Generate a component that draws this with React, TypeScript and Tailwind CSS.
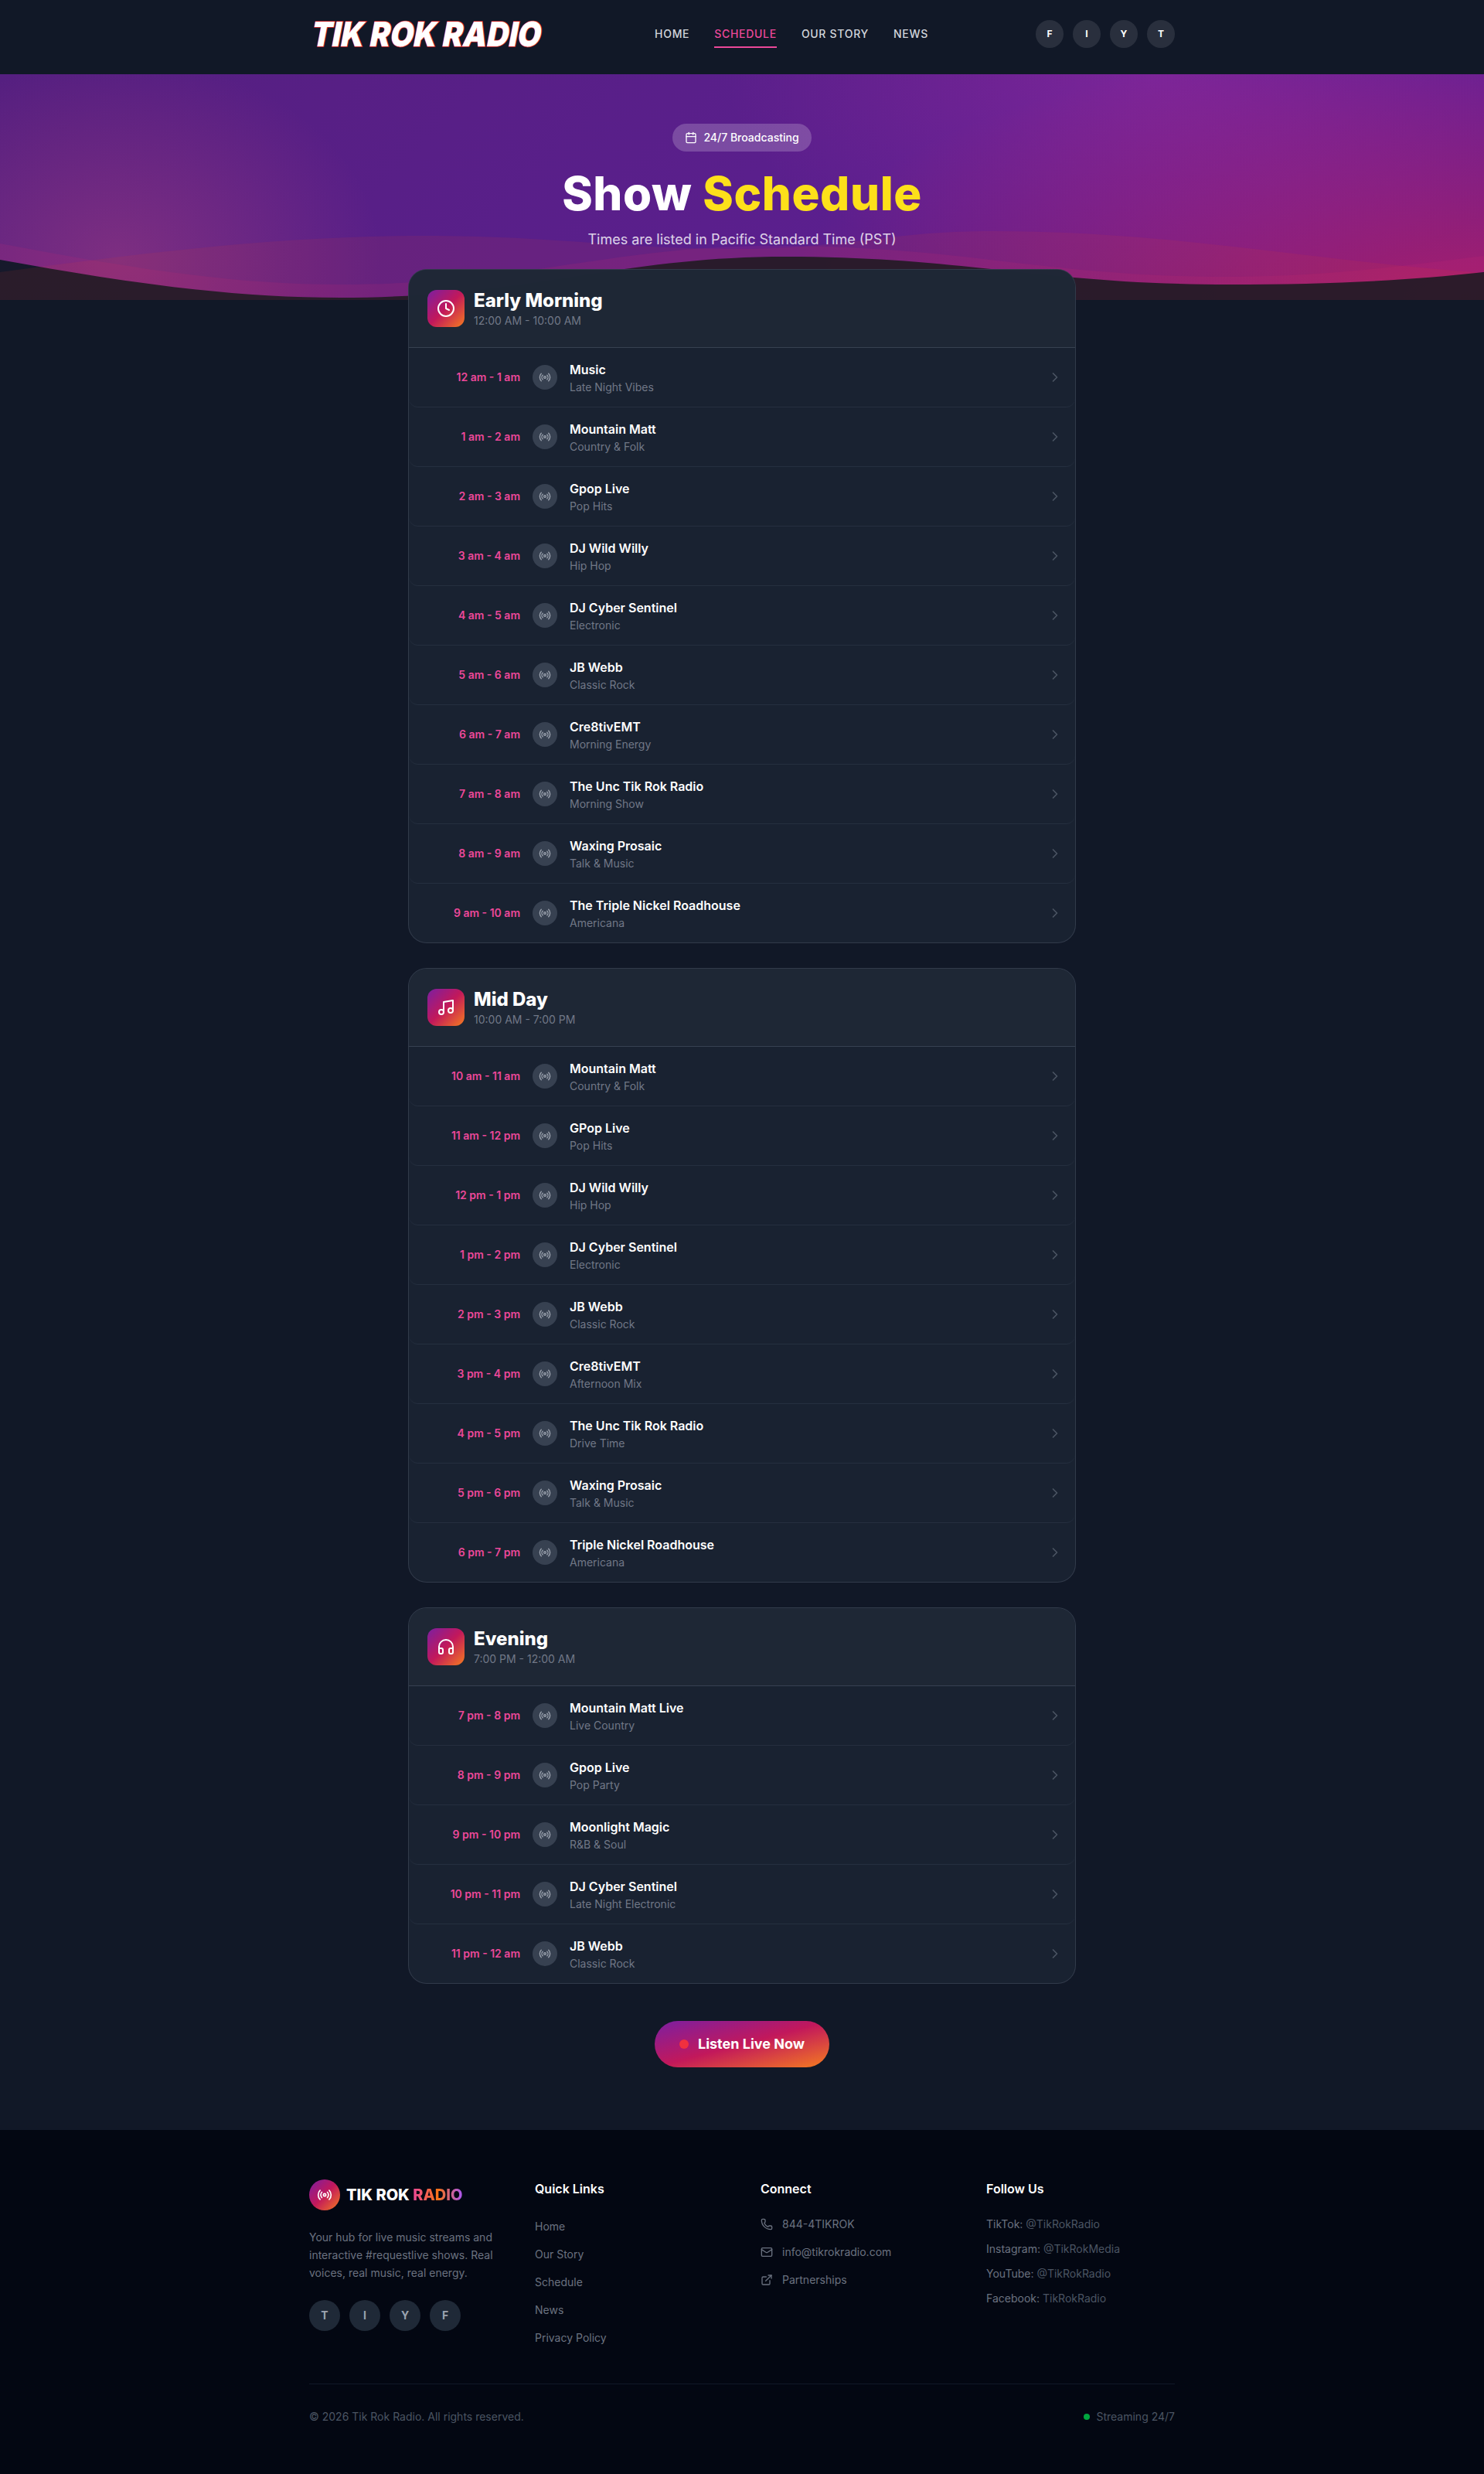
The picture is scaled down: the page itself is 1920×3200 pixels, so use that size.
import { Calendar, ChevronRight, Clock, ExternalLink, Headphones, Mail, Music, Phone, Radio } from "lucide-react";

const sections = [
  {
    title: "Early Morning",
    hours: "12:00 AM - 10:00 AM",
    icon: Clock,
    shows: [
      ["12 am - 1 am", "Music", "Late Night Vibes"],
      ["1 am - 2 am", "Mountain Matt", "Country & Folk"],
      ["2 am - 3 am", "Gpop Live", "Pop Hits"],
      ["3 am - 4 am", "DJ Wild Willy", "Hip Hop"],
      ["4 am - 5 am", "DJ Cyber Sentinel", "Electronic"],
      ["5 am - 6 am", "JB Webb", "Classic Rock"],
      ["6 am - 7 am", "Cre8tivEMT", "Morning Energy"],
      ["7 am - 8 am", "The Unc Tik Rok Radio", "Morning Show"],
      ["8 am - 9 am", "Waxing Prosaic", "Talk & Music"],
      ["9 am - 10 am", "The Triple Nickel Roadhouse", "Americana"],
    ],
  },
  {
    title: "Mid Day",
    hours: "10:00 AM - 7:00 PM",
    icon: Music,
    shows: [
      ["10 am - 11 am", "Mountain Matt", "Country & Folk"],
      ["11 am - 12 pm", "GPop Live", "Pop Hits"],
      ["12 pm - 1 pm", "DJ Wild Willy", "Hip Hop"],
      ["1 pm - 2 pm", "DJ Cyber Sentinel", "Electronic"],
      ["2 pm - 3 pm", "JB Webb", "Classic Rock"],
      ["3 pm - 4 pm", "Cre8tivEMT", "Afternoon Mix"],
      ["4 pm - 5 pm", "The Unc Tik Rok Radio", "Drive Time"],
      ["5 pm - 6 pm", "Waxing Prosaic", "Talk & Music"],
      ["6 pm - 7 pm", "Triple Nickel Roadhouse", "Americana"],
    ],
  },
  {
    title: "Evening",
    hours: "7:00 PM - 12:00 AM",
    icon: Headphones,
    shows: [
      ["7 pm - 8 pm", "Mountain Matt Live", "Live Country"],
      ["8 pm - 9 pm", "Gpop Live", "Pop Party"],
      ["9 pm - 10 pm", "Moonlight Magic", "R&B & Soul"],
      ["10 pm - 11 pm", "DJ Cyber Sentinel", "Late Night Electronic"],
      ["11 pm - 12 am", "JB Webb", "Classic Rock"],
    ],
  },
];

const gradient = "bg-[linear-gradient(to_bottom_right,#7b1fa2_0%,#c2185b_50%,#f57c20_100%)]";
const heading = "[font-family:Inter,sans-serif] font-extrabold";

function Header() {
  return (
    <header className="h-24 bg-[#111827]">
      <div className="mx-auto flex h-[88px] w-[1120px] items-center justify-between">
        {/* logo is a picture in the original, kept as styled text here */}
        <div className="ml-1 w-[304px] origin-left -skew-x-12 scale-x-[0.89] whitespace-nowrap [font-family:Inter,sans-serif] text-[44px] leading-none font-black text-white [-webkit-text-stroke:1.5px_#dc2626] [paint-order:stroke_fill]">
          TIK ROK RADIO
        </div>
        <nav className="flex items-center gap-8 text-sm font-medium tracking-wider text-[#d1d5db] uppercase">
          <a>Home</a>
          <a className="relative text-[#ec4899]">
            Schedule
            <span className="absolute inset-x-0 -bottom-2 h-0.5 bg-[#ec4899]" />
          </a>
          <a>Our Story</a>
          <a>News</a>
        </nav>
        <div className="flex gap-3">
          {["F", "I", "Y", "T"].map((l) => (
            <span key={l} className="flex h-9 w-9 items-center justify-center rounded-full bg-white/10 text-xs font-bold text-white">
              {l}
            </span>
          ))}
        </div>
      </div>
    </header>
  );
}

function Hero() {
  return (
    <section className="relative overflow-hidden bg-[radial-gradient(ellipse_340px_260px_at_8%_82%,rgba(236,90,120,0.26),transparent),radial-gradient(ellipse_560px_280px_at_78%_0%,rgba(190,50,170,0.32),transparent),radial-gradient(ellipse_900px_340px_at_100%_100%,rgba(225,29,72,0.54),transparent),linear-gradient(135deg,#551f80_0%,#5f1f98_100%)] py-16 text-center">
      <svg className="absolute inset-x-0 bottom-0 h-[100px] w-full" viewBox="0 0 1920 100" preserveAspectRatio="none">
        <path d="M0,27 C150,55 290,80 440,80 C680,80 790,30 1000,30 C1250,30 1350,70 1590,70 C1720,70 1820,55 1920,43 V100 H0 Z" fill="#db2777" fillOpacity="0.12" />
        <path d="M0,48 C150,75 290,97 440,97 C680,97 800,44 1016,44 C1250,44 1350,80 1590,80 C1720,80 1820,75 1920,64 V100 H0 Z" fill="#111827" fillOpacity="0.95" />
        <path d="M0,64 C180,40 360,17 550,17 C720,17 800,34 955,34 C1090,34 1150,11 1285,11 C1520,11 1700,50 1920,65 V100 H0 Z" fill="#f43f1e" fillOpacity="0.09" />
      </svg>
      <div className="relative">
        <div className="mb-6 inline-flex h-9 items-center gap-2 rounded-full bg-white/20 px-4 text-sm font-medium text-white">
          <Calendar size={16} />
          24/7 Broadcasting
        </div>
        <h1 className={`${heading} mb-4 text-6xl tracking-[0.01em] text-white`}>
          Show <span className="text-[#fde01a]">Schedule</span>
        </h1>
        <p className="text-lg text-white/80">Times are listed in Pacific Standard Time (PST)</p>
      </div>
    </section>
  );
}

function ScheduleCard({ section }: { section: (typeof sections)[number] }) {
  const Icon = section.icon;
  return (
    <div className="overflow-hidden rounded-3xl border border-[#374151]/80 bg-[#1a2332]/95">
      <div className="flex items-center gap-3 border-b border-[#374151] bg-[#1f2937]/80 p-6">
        <div className={`flex h-12 w-12 items-center justify-center rounded-xl text-white ${gradient}`}>
          <Icon size={24} />
        </div>
        <div>
          <h2 className={`${heading} text-2xl text-white`}>{section.title}</h2>
          <p className="text-sm text-[#717887]">{section.hours}</p>
        </div>
      </div>
      {section.shows.map(([time, name, genre], i) => (
        <div key={time} className={`flex items-center gap-4 rounded-xl px-4 py-4 ${i < section.shows.length - 1 ? "border-b border-[#252f3f]" : ""}`}>
          <div className="w-32 text-right text-sm font-semibold text-[#ec4899]">{time}</div>
          <div className="flex h-8 w-8 items-center justify-center rounded-full bg-[#374151] text-[#9ca3af]">
            <Radio size={16} />
          </div>
          <div className="flex-1">
            <div className="font-semibold text-white">{name}</div>
            <div className="-mb-px pt-px text-sm text-[#717887]">{genre}</div>
          </div>
          <ChevronRight size={20} className="text-[#4b5563]" />
        </div>
      ))}
    </div>
  );
}

function Footer() {
  return (
    <footer className="bg-[#030712] pt-16 pb-16">
      <div className="mx-auto w-[1120px]">
        <div className="mb-12 grid grid-cols-4 gap-12">
          <div>
            <div className="mb-6 flex items-center gap-2">
              <div className={`flex h-10 w-10 items-center justify-center rounded-full text-white ${gradient}`}>
                <Radio size={20} />
              </div>
              <span className={`${heading} text-xl text-white`}>
                TIK ROK{" "}
                <span className="bg-[linear-gradient(90deg,#ec4899,#f97316,#a855f7)] bg-clip-text text-transparent">RADIO</span>
              </span>
            </div>
            <p className="mb-6 text-sm leading-relaxed text-[#6b7280]">
              Your hub for live music streams and interactive #requestlive shows. Real voices, real music, real energy.
            </p>
            <div className="flex gap-3">
              {["T", "I", "Y", "F"].map((l) => (
                <span key={l} className="flex h-10 w-10 items-center justify-center rounded-full bg-[#1f2937] text-sm font-bold text-[#9ca3af]">
                  {l}
                </span>
              ))}
            </div>
          </div>
          <div>
            <h4 className="mb-6 font-semibold text-white">Quick Links</h4>
            <ul className="space-y-3">
              {["Home", "Our Story", "Schedule", "News", "Privacy Policy"].map((l) => (
                <li key={l}>
                  <a className="text-sm text-[#6b7280]">{l}</a>
                </li>
              ))}
            </ul>
          </div>
          <div>
            <h4 className="mb-6 font-semibold text-white">Connect</h4>
            <ul className="space-y-4 text-sm text-[#6b7280]">
              <li className="flex items-center gap-3">
                <Phone size={16} />
                844-4TIKROK
              </li>
              <li className="flex items-center gap-3">
                <Mail size={16} />
                info@tikrokradio.com
              </li>
              <li className="flex items-center gap-3">
                <ExternalLink size={16} />
                Partnerships
              </li>
            </ul>
          </div>
          <div>
            <h4 className="mb-6 font-semibold text-white">Follow Us</h4>
            <ul className="space-y-3 text-sm text-[#6b7280]">
              <li>TikTok: <span className="text-[#4b5563]">@TikRokRadio</span></li>
              <li>Instagram: <span className="text-[#4b5563]">@TikRokMedia</span></li>
              <li>YouTube: <span className="text-[#4b5563]">@TikRokRadio</span></li>
              <li>Facebook: <span className="text-[#4b5563]">TikRokRadio</span></li>
            </ul>
          </div>
        </div>
        <div className="flex items-center justify-between border-t border-[#111827] pt-8 text-sm text-[#4b5563]">
          <p>© 2026 Tik Rok Radio. All rights reserved.</p>
          <div className="flex items-center gap-2">
            <span className="h-2 w-2 rounded-full bg-[#00a63e]" />
            Streaming 24/7
          </div>
        </div>
      </div>
    </footer>
  );
}

export default function App() {
  return (
    <div className="min-h-[3200px] bg-[#111827] [font-family:Inter,sans-serif]">
      <Header />
      <Hero />
      <main className="relative z-10 mx-auto -mt-10 w-[864px] pb-[81px]">
        <div className="space-y-8">
          {sections.map((s) => (
            <ScheduleCard key={s.title} section={s} />
          ))}
        </div>
        <div className="mt-12 flex justify-center">
          <a className={`flex h-[60px] items-center gap-3 rounded-full px-8 text-lg font-bold text-white ${gradient}`}>
            <span className="h-3 w-3 rounded-full bg-[#f0303f]" />
            Listen Live Now
          </a>
        </div>
      </main>
      <Footer />
    </div>
  );
}
